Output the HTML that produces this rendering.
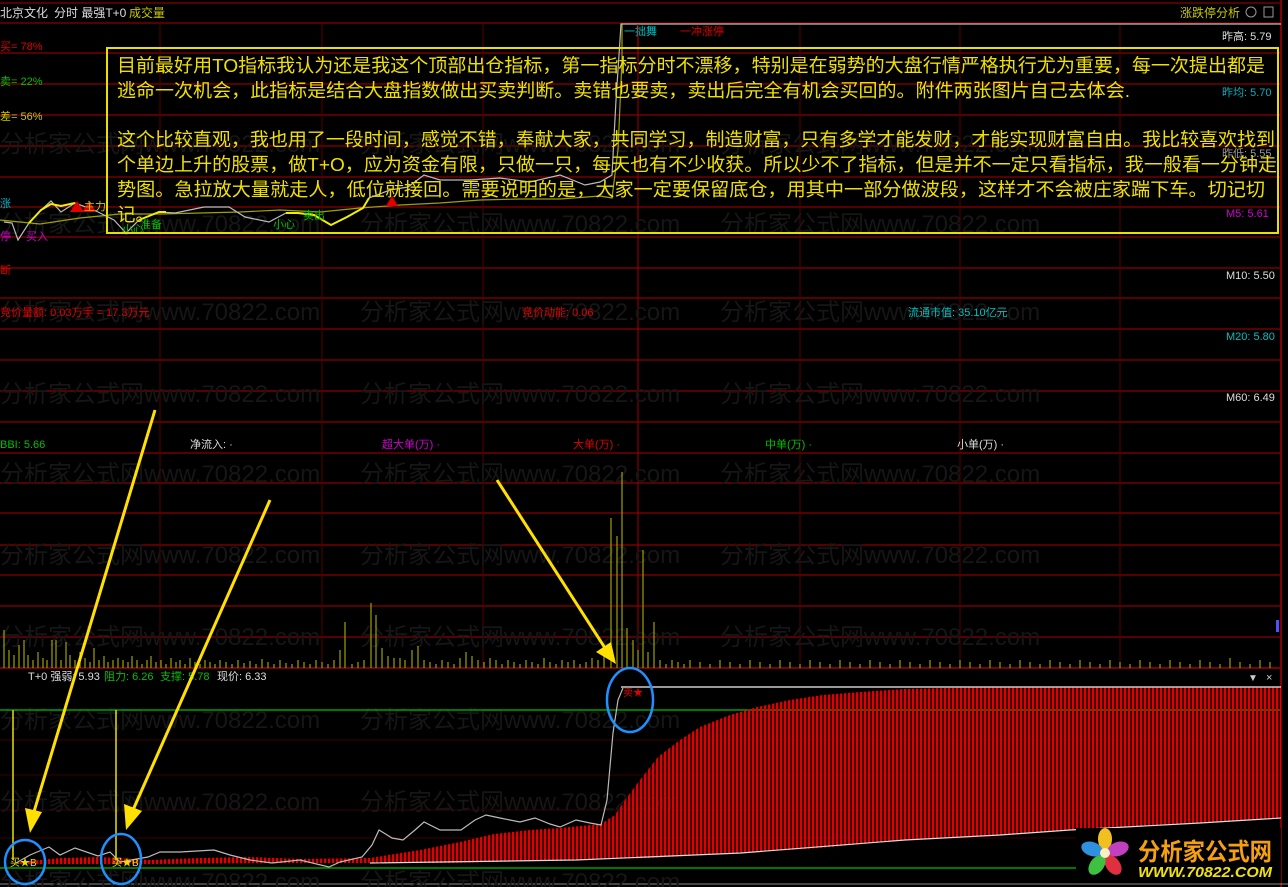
<!DOCTYPE html>
<html><head><meta charset="utf-8"><style>
html,body{margin:0;padding:0;background:#000;}
svg{display:block}
text{font-family:"Liberation Sans","Noto Sans CJK SC",sans-serif;}
</style></head><body>
<svg width="1288" height="887" viewBox="0 0 1288 887" xmlns="http://www.w3.org/2000/svg">
<defs>
<pattern id="stripes" width="4" height="10" patternUnits="userSpaceOnUse">
<rect x="0" y="0" width="2.4" height="10" fill="#e00000"/>
</pattern>
</defs>
<rect width="1288" height="887" fill="#000"/>
<g stroke="#8a0000" stroke-width="1.3">
<line x1="0" y1="3" x2="1280" y2="3"/>
<line x1="0" y1="23" x2="1280" y2="23"/>
<line x1="0" y1="53" x2="1280" y2="53"/>
<line x1="0" y1="84" x2="1280" y2="84"/>
<line x1="0" y1="115" x2="1280" y2="115"/>
<line x1="0" y1="146" x2="1280" y2="146"/>
<line x1="0" y1="177" x2="1280" y2="177"/>
<line x1="0" y1="207" x2="1280" y2="207"/>
<line x1="0" y1="237" x2="1280" y2="237"/>
<line x1="0" y1="268" x2="1280" y2="268"/>
<line x1="0" y1="298" x2="1280" y2="298"/>
<line x1="0" y1="329" x2="1280" y2="329"/>
<line x1="0" y1="360" x2="1280" y2="360"/>
<line x1="0" y1="391" x2="1280" y2="391"/>
<line x1="0" y1="422" x2="1280" y2="422"/>
<line x1="0" y1="453" x2="1280" y2="453"/>
<line x1="0" y1="483" x2="1280" y2="483"/>
<line x1="0" y1="513" x2="1280" y2="513"/>
<line x1="0" y1="545" x2="1280" y2="545"/>
<line x1="0" y1="575" x2="1280" y2="575"/>
<line x1="0" y1="606" x2="1280" y2="606"/>
<line x1="0" y1="637" x2="1280" y2="637"/>
<line x1="0" y1="668" x2="1280" y2="668" stroke="#c00000"/>
</g>
<g stroke="#3a0000" stroke-width="1">
<line x1="0" y1="740" x2="1280" y2="740"/>
<line x1="0" y1="775" x2="1280" y2="775"/>
<line x1="0" y1="810" x2="1280" y2="810"/>
<line x1="0" y1="838" x2="1280" y2="838"/>
</g>
<g stroke="#5a0000" stroke-width="1">
<line x1="160" y1="23" x2="160" y2="668"/>
<line x1="322" y1="23" x2="322" y2="668"/>
<line x1="483" y1="23" x2="483" y2="668"/>
<line x1="638" y1="23" x2="638" y2="668" stroke="#a00000"/>
<line x1="800" y1="23" x2="800" y2="668"/>
<line x1="960" y1="23" x2="960" y2="668"/>
<line x1="1120" y1="23" x2="1120" y2="668"/>
</g>
<line x1="1281" y1="0" x2="1281" y2="887" stroke="#aa0000" stroke-width="1.5"/>
<line x1="0" y1="884" x2="1288" y2="884" stroke="#888" stroke-width="1"/>

<g fill="#161616" font-size="24">
<text x="0" y="152">分析家公式网www.70822.com</text>
<text x="360" y="152">分析家公式网www.70822.com</text>
<text x="720" y="152">分析家公式网www.70822.com</text>
<text x="0" y="232">分析家公式网www.70822.com</text>
<text x="360" y="232">分析家公式网www.70822.com</text>
<text x="720" y="232">分析家公式网www.70822.com</text>
<text x="0" y="320">分析家公式网www.70822.com</text>
<text x="360" y="320">分析家公式网www.70822.com</text>
<text x="720" y="320">分析家公式网www.70822.com</text>
<text x="0" y="402">分析家公式网www.70822.com</text>
<text x="360" y="402">分析家公式网www.70822.com</text>
<text x="720" y="402">分析家公式网www.70822.com</text>
<text x="0" y="482">分析家公式网www.70822.com</text>
<text x="360" y="482">分析家公式网www.70822.com</text>
<text x="720" y="482">分析家公式网www.70822.com</text>
<text x="0" y="563">分析家公式网www.70822.com</text>
<text x="360" y="563">分析家公式网www.70822.com</text>
<text x="720" y="563">分析家公式网www.70822.com</text>
<text x="0" y="645">分析家公式网www.70822.com</text>
<text x="360" y="645">分析家公式网www.70822.com</text>
<text x="720" y="645">分析家公式网www.70822.com</text>
<text x="0" y="728">分析家公式网www.70822.com</text>
<text x="360" y="728">分析家公式网www.70822.com</text>
<text x="0" y="810">分析家公式网www.70822.com</text>
<text x="360" y="810">分析家公式网www.70822.com</text>
<text x="0" y="890">分析家公式网www.70822.com</text>
<text x="360" y="890">分析家公式网www.70822.com</text>
</g>

<text x="0" y="17" font-size="12" fill="#ddd">北京文化</text>
<text x="54" y="17" font-size="12" fill="#ddd">分时 最强T+0</text>
<text x="129" y="17" font-size="12" fill="#c8c800">成交量</text>
<text x="1180" y="17" font-size="12" fill="#c8c800">涨跌停分析</text>
<rect x="1246" y="7" width="10" height="10" rx="5" fill="none" stroke="#999"/>
<rect x="1264" y="7" width="9" height="10" fill="none" stroke="#999"/>

<text x="0" y="50" font-size="11" fill="#e00000">买= 78%</text>
<text x="0" y="85" font-size="11" fill="#00c000">卖= 22%</text>
<text x="0" y="120" font-size="11" fill="#c8c800">差= 56%</text>
<text x="0" y="207" font-size="11" fill="#00b0c0">涨</text>
<text x="0" y="240" font-size="11" fill="#d000d0">停</text>
<text x="26" y="240" font-size="11" fill="#d000d0">买入</text>
<text x="0" y="274" font-size="11" fill="#e00000">断</text>
<text x="0" y="316" font-size="11" fill="#e00000">竞价量额: 0.03万手 = 17.3万元</text>
<text x="522" y="316" font-size="11" fill="#e00000">竞价动能: 0.06</text>
<text x="908" y="316" font-size="11" fill="#00c0c0">流通市值: 35.10亿元</text>

<text x="1222" y="40" font-size="11" fill="#ddd">昨高: 5.79</text>
<text x="1222" y="96" font-size="11" fill="#00b0c0">昨均: 5.70</text>
<text x="1222" y="157" font-size="11" fill="#999">昨低: 5.55</text>
<text x="1226" y="217" font-size="11" fill="#d000d0">M5: 5.61</text>
<text x="1226" y="279" font-size="11" fill="#ddd">M10: 5.50</text>
<text x="1226" y="340" font-size="11" fill="#00c0c0">M20: 5.80</text>
<text x="1226" y="401" font-size="11" fill="#ddd">M60: 6.49</text>

<polyline fill="none" stroke="#a0a000" stroke-width="1.2" points="0,220 40,224 80,218 120,214 160,214 200,213 240,212 280,210 320,212 360,208 400,205 440,203 480,200 520,199 560,199 600,196 612,198 618,150 622,60 622,24"/>
<polyline fill="none" stroke="#bbb" stroke-width="1.2" points="4,222 12,223 18,240 29,223 41,210 51,201 61,212 75,203 94,210 114,220 126,233 139,220 159,212 175,213 204,207 229,207 245,217 269,222 286,213 298,213 314,215 331,225 347,217 363,208 369,198 390,190 408,187 424,175 440,180 470,180 500,178 530,182 560,175 585,185 600,182 612,175 616,100 620,40 621,24 1281,24"/>
<polyline fill="none" stroke="#f0f000" stroke-width="2" points="29,223 41,210 51,204 61,206 75,203"/>
<polyline fill="none" stroke="#f0f000" stroke-width="2" points="139,220 159,212 166,212"/>
<polyline fill="none" stroke="#f0f000" stroke-width="2" points="286,213 298,213 314,215 331,225 347,217 363,208 369,198"/>
<polygon points="70,212 77,201 84,212" fill="#e00000"/>
<polygon points="82,212 89,201 96,212" fill="#e00000"/>
<polygon points="386,206 392,196 398,206" fill="#e00000"/>
<text x="84" y="210" font-size="11" fill="#c8c800">主力</text>
<text x="140" y="228" font-size="11" fill="#00c000">准备</text>
<text x="273" y="228" font-size="11" fill="#00c000">小心</text>
<text x="303" y="219" font-size="11" fill="#00c000">卖出</text>
<text x="122" y="233" font-size="11" fill="#00c000">小心</text>
<text x="624" y="35" font-size="11" fill="#00c0c0">一拙舞</text>
<text x="680" y="35" font-size="11" fill="#e00000">一冲涨停</text>
<line x1="638" y1="24" x2="638" y2="60" stroke="#c00000"/>

<rect x="107" y="48" width="1171" height="185" fill="none" stroke="#e8e000" stroke-width="2"/>
<g fill="#f0e000" font-size="18.5">
<text x="117" y="72" textLength="1148" lengthAdjust="spacingAndGlyphs">目前最好用TO指标我认为还是我这个顶部出仓指标，第一指标分时不漂移，特别是在弱势的大盘行情严格执行尤为重要，每一次提出都是</text>
<text x="117" y="97" textLength="1013" lengthAdjust="spacingAndGlyphs">逃命一次机会，此指标是结合大盘指数做出买卖判断。卖错也要卖，卖出后完全有机会买回的。附件两张图片自己去体会.</text>
<text x="117" y="146" textLength="1158" lengthAdjust="spacingAndGlyphs">这个比较直观，我也用了一段时间，感觉不错，奉献大家，共同学习，制造财富，只有多学才能发财，才能实现财富自由。我比较喜欢找到</text>
<text x="117" y="171" textLength="1160" lengthAdjust="spacingAndGlyphs">个单边上升的股票，做T+O，应为资金有限，只做一只，每天也有不少收获。所以少不了指标，但是并不一定只看指标，我一般看一分钟走</text>
<text x="117" y="196" textLength="1148" lengthAdjust="spacingAndGlyphs">势图。急拉放大量就走人，低位就接回。需要说明的是，大家一定要保留底仓，用其中一部分做波段，这样才不会被庄家踹下车。切记切</text>
<text x="117" y="221">记。</text>
</g>

<text x="0" y="448" font-size="11" fill="#00c000">BBI: 5.66</text>
<text x="190" y="448" font-size="11" fill="#ddd">净流入: ·</text>
<text x="382" y="448" font-size="11" fill="#d000d0">超大单(万) ·</text>
<text x="573" y="448" font-size="11" fill="#e00000">大单(万) ·</text>
<text x="765" y="448" font-size="11" fill="#00c000">中单(万) ·</text>
<text x="957" y="448" font-size="11" fill="#ddd">小单(万) ·</text>

<path fill="none" stroke="#a0a000" stroke-width="1.2" d="M4 668V630 M9 668V650 M14 668V655 M19 668V645 M24 668V640 M28 668V655 M33 668V660 M38 668V652 M43 668V658 M47 668V660 M52 668V640 M56 668V640 M61 668V660 M66 668V642 M70 668V655 M75 668V660 M80 668V652 M85 668V658 M90 668V662 M94 668V648 M99 668V660 M104 668V656 M108 668V662 M113 668V660 M118 668V658 M123 668V660 M128 668V662 M132 668V656 M137 668V660 M142 668V664 M147 668V660 M151 668V656 M156 668V662 M161 668V660 M166 668V664 M171 668V658 M176 668V662 M180 668V660 M185 668V664 M190 668V658 M195 668V662 M200 668V664 M205 668V660 M210 668V662 M215 668V664 M220 668V660 M226 668V662 M232 668V664 M238 668V660 M244 668V663 M250 668V661 M256 668V664 M262 668V659 M268 668V662 M274 668V664 M280 668V660 M286 668V663 M292 668V664 M298 668V660 M304 668V662 M310 668V664 M316 668V660 M322 668V662 M328 668V664 M334 668V660 M340 668V650 M345 668V622 M352 668V664 M358 668V662 M364 668V660 M371 668V603 M376 668V615 M382 668V648 M388 668V656 M394 668V658 M400 668V658 M405 668V660 M412 668V650 M418 668V646 M424 668V660 M430 668V662 M436 668V664 M442 668V660 M448 668V662 M454 668V664 M460 668V658 M466 668V652 M472 668V656 M478 668V660 M484 668V662 M490 668V658 M496 668V660 M502 668V664 M508 668V660 M514 668V662 M520 668V664 M526 668V660 M532 668V662 M538 668V664 M544 668V658 M550 668V662 M556 668V664 M562 668V660 M568 668V662 M574 668V660 M580 668V664 M586 668V662 M592 668V658 M598 668V660 M604 668V655 M611 668V518 M617 668V536 M622 668V472 M627 668V628 M633 668V640 M638 668V650 M643 668V550 M648 668V652 M654 668V622 M660 668V660 M666 668V664 M672 668V660 M678 668V662 M684 668V664 M690 668V660 M700 668V662 M710 668V664 M720 668V660 M730 668V662 M740 668V664 M750 668V660 M760 668V662 M770 668V664 M780 668V660 M790 668V662 M800 668V664 M810 668V660 M820 668V662 M830 668V664 M840 668V660 M850 668V662 M860 668V664 M870 668V660 M880 668V662 M890 668V664 M900 668V660 M910 668V662 M920 668V664 M930 668V660 M940 668V662 M950 668V664 M960 668V660 M970 668V662 M980 668V664 M990 668V660 M1000 668V662 M1010 668V664 M1020 668V660 M1030 668V662 M1040 668V664 M1050 668V660 M1060 668V662 M1070 668V664 M1080 668V660 M1090 668V662 M1100 668V664 M1110 668V660 M1120 668V662 M1130 668V664 M1140 668V660 M1150 668V662 M1160 668V664 M1170 668V660 M1180 668V662 M1190 668V664 M1200 668V660 M1210 668V662 M1220 668V664 M1230 668V658 M1240 668V662 M1250 668V664 M1260 668V660 M1270 668V662"/>
<rect x="1276" y="620" width="3" height="12" fill="#5050ff"/>

<text x="28" y="680" font-size="11" fill="#ddd">T+0 强弱: 5.93</text>
<text x="104" y="680" font-size="11" fill="#00c000">阻力: 6.26</text>
<text x="160" y="680" font-size="11" fill="#00c000">支撑: 5.78</text>
<text x="217" y="680" font-size="11" fill="#ddd">现价: 6.33</text>
<text x="1248" y="681" font-size="10" fill="#ccc">▼</text>
<text x="1266" y="681" font-size="11" fill="#ccc">×</text>
<line x1="0" y1="710" x2="1281" y2="710" stroke="#00a000" stroke-width="1.5"/>
<line x1="0" y1="868" x2="1080" y2="868" stroke="#00a000" stroke-width="1.5"/>

<polygon fill="url(#stripes)" points="20,862 60,858 100,857 150,860 200,858 250,857 300,859 370,858 420,850 460,842 494,834 530,830 560,828 601,824 615,815 625,800 640,780 658,757 680,740 700,727 730,715 757,707 790,700 823,695 860,692 905,689 988,687 1281,687 1281,818 1200,823 1070,830 1000,835 905,840 820,848 741,853 650,858 576,860 450,863 370,863 300,863 150,864 20,864"/>
<line x1="621" y1="687" x2="1281" y2="687" stroke="#ccc" stroke-width="1.5"/>
<polyline fill="none" stroke="#ddd" stroke-width="1.2" points="370,863 576,860 741,853 905,840 1000,835 1070,830 1200,823 1281,818"/>
<polyline fill="none" stroke="#bbb" stroke-width="1.2" points="16,863 30,855 49,847 60,855 75,848 98,856 110,852 120,862 148,857 160,852 180,852 214,850 230,855 250,860 272,863 300,860 329,867 340,862 362,857 372,845 379,830 392,838 403,840 415,830 424,822 440,830 461,830 475,820 486,815 500,818 520,822 535,818 550,824 560,827 576,820 590,823 601,825 607,800 613,733 618,700 623,688"/>

<line x1="13" y1="710" x2="13" y2="860" stroke="#e8e000" stroke-width="1.5"/>
<line x1="116" y1="710" x2="116" y2="860" stroke="#e8e000" stroke-width="1.5"/>
<text x="10" y="866" font-size="10" fill="#e8e000">买★B</text>
<text x="112" y="866" font-size="10" fill="#e8e000">买★B</text>
<text x="623" y="696" font-size="10" fill="#e00000">卖★</text>
<g fill="#ffe000" stroke="#ffe000">
<line x1="155" y1="410" x2="33" y2="815" stroke-width="3"/>
<polygon points="25,808 30,833 42,812" stroke="none"/>
<line x1="270" y1="500" x2="133" y2="810" stroke-width="3"/>
<polygon points="124,804 126,830 142,811" stroke="none"/>
<line x1="497" y1="480" x2="605" y2="648" stroke-width="3"/>
<polygon points="596,652 616,664 611,642" stroke="none"/>
</g>
<g fill="none" stroke="#1e90ff" stroke-width="2.5">
<ellipse cx="25" cy="862" rx="20" ry="22"/>
<ellipse cx="121" cy="859" rx="20" ry="25"/>
<ellipse cx="630" cy="700" rx="23" ry="32"/>
</g>

<rect x="1076" y="828" width="205" height="55" fill="#000"/>
<g transform="translate(1105,853)">
<ellipse cx="0" cy="-14" rx="7" ry="11" fill="#f0c020"/>
<ellipse cx="13" cy="-4" rx="7" ry="11" fill="#c040c0" transform="rotate(72 13 -4)"/>
<ellipse cx="8" cy="12" rx="7" ry="11" fill="#e03040" transform="rotate(144 8 12)"/>
<ellipse cx="-8" cy="12" rx="7" ry="11" fill="#40c040" transform="rotate(216 -8 12)"/>
<ellipse cx="-13" cy="-4" rx="7" ry="11" fill="#3090e0" transform="rotate(288 -13 -4)"/>
<circle r="5" fill="#f8f0c0"/>
</g>
<text x="1138" y="860" font-size="24" font-weight="bold" fill="#f5a010" textLength="134" lengthAdjust="spacingAndGlyphs">分析家公式网</text>
<text x="1138" y="877" font-size="15" font-weight="bold" font-style="italic" fill="#f0e010" textLength="134" lengthAdjust="spacingAndGlyphs">WWW.70822.COM</text>
</svg>
</body></html>
